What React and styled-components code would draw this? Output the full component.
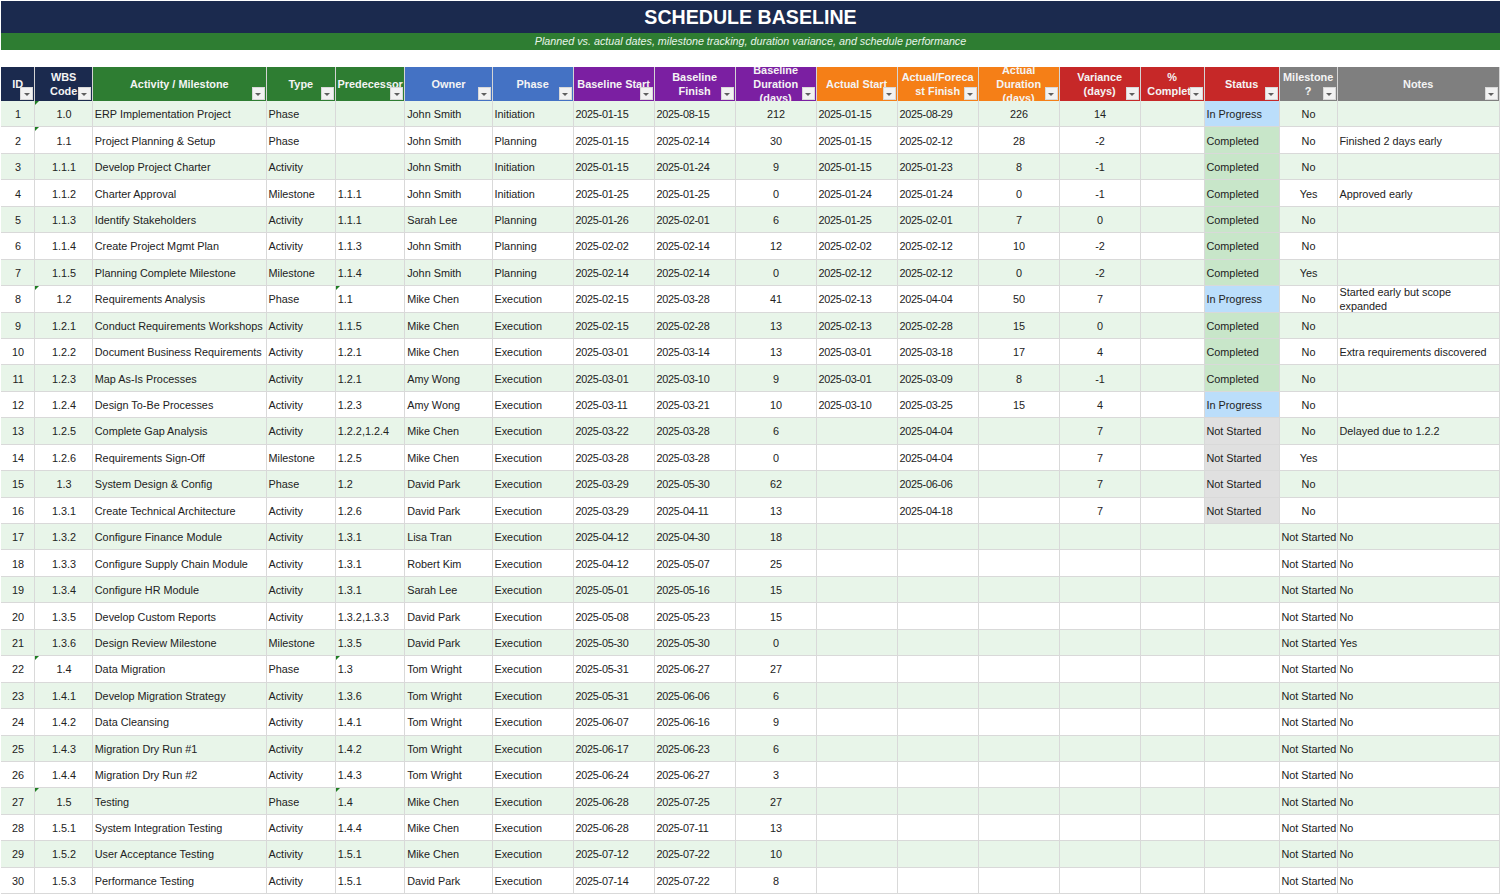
import styled, { createGlobalStyle } from "styled-components";

const GlobalStyle = createGlobalStyle`
  html, body {
    margin: 0;
    padding: 0;
    background: #ffffff;
    overflow: hidden;
  }
  body {
    font-family: "Liberation Sans", Arial, sans-serif;
  }
`;

const columns = [
  { title: ["ID"], color: "#1b2a4e" },
  { title: ["WBS", "Code"], color: "#1b2a4e" },
  { title: ["Activity / Milestone"], color: "#2e7d32" },
  { title: ["Type"], color: "#2e7d32" },
  { title: ["Predecessor"], color: "#2e7d32" },
  { title: ["Owner"], color: "#4472c4" },
  { title: ["Phase"], color: "#4472c4" },
  { title: ["Baseline Start"], color: "#7b1fa2" },
  { title: ["Baseline", "Finish"], color: "#7b1fa2" },
  { title: ["Baseline", "Duration", "(days)"], color: "#7b1fa2" },
  { title: ["Actual Start"], color: "#f57f17" },
  { title: ["Actual/Foreca", "st Finish"], color: "#f57f17" },
  { title: ["Actual", "Duration", "(days)"], color: "#f57f17" },
  { title: ["Variance", "(days)"], color: "#c62828" },
  { title: ["%", "Complete"], color: "#c62828" },
  { title: ["Status"], color: "#c62828" },
  { title: ["Milestone", "?"], color: "#7f7f7f" },
  { title: ["Notes"], color: "#7f7f7f" },
];

const rows = [
  ["1", "1.0", "ERP Implementation Project", "Phase", "", "John Smith", "Initiation", "2025-01-15", "2025-08-15", "212", "2025-01-15", "2025-08-29", "226", "14", "In Progress", "No", "", "w"],
  ["2", "1.1", "Project Planning & Setup", "Phase", "", "John Smith", "Planning", "2025-01-15", "2025-02-14", "30", "2025-01-15", "2025-02-12", "28", "-2", "Completed", "No", "Finished 2 days early", "w"],
  ["3", "1.1.1", "Develop Project Charter", "Activity", "", "John Smith", "Initiation", "2025-01-15", "2025-01-24", "9", "2025-01-15", "2025-01-23", "8", "-1", "Completed", "No", ""],
  ["4", "1.1.2", "Charter Approval", "Milestone", "1.1.1", "John Smith", "Initiation", "2025-01-25", "2025-01-25", "0", "2025-01-24", "2025-01-24", "0", "-1", "Completed", "Yes", "Approved early"],
  ["5", "1.1.3", "Identify Stakeholders", "Activity", "1.1.1", "Sarah Lee", "Planning", "2025-01-26", "2025-02-01", "6", "2025-01-25", "2025-02-01", "7", "0", "Completed", "No", ""],
  ["6", "1.1.4", "Create Project Mgmt Plan", "Activity", "1.1.3", "John Smith", "Planning", "2025-02-02", "2025-02-14", "12", "2025-02-02", "2025-02-12", "10", "-2", "Completed", "No", ""],
  ["7", "1.1.5", "Planning Complete Milestone", "Milestone", "1.1.4", "John Smith", "Planning", "2025-02-14", "2025-02-14", "0", "2025-02-12", "2025-02-12", "0", "-2", "Completed", "Yes", ""],
  ["8", "1.2", "Requirements Analysis", "Phase", "1.1", "Mike Chen", "Execution", "2025-02-15", "2025-03-28", "41", "2025-02-13", "2025-04-04", "50", "7", "In Progress", "No", "Started early but scope expanded", "wp"],
  ["9", "1.2.1", "Conduct Requirements Workshops", "Activity", "1.1.5", "Mike Chen", "Execution", "2025-02-15", "2025-02-28", "13", "2025-02-13", "2025-02-28", "15", "0", "Completed", "No", ""],
  ["10", "1.2.2", "Document Business Requirements", "Activity", "1.2.1", "Mike Chen", "Execution", "2025-03-01", "2025-03-14", "13", "2025-03-01", "2025-03-18", "17", "4", "Completed", "No", "Extra requirements discovered"],
  ["11", "1.2.3", "Map As-Is Processes", "Activity", "1.2.1", "Amy Wong", "Execution", "2025-03-01", "2025-03-10", "9", "2025-03-01", "2025-03-09", "8", "-1", "Completed", "No", ""],
  ["12", "1.2.4", "Design To-Be Processes", "Activity", "1.2.3", "Amy Wong", "Execution", "2025-03-11", "2025-03-21", "10", "2025-03-10", "2025-03-25", "15", "4", "In Progress", "No", ""],
  ["13", "1.2.5", "Complete Gap Analysis", "Activity", "1.2.2,1.2.4", "Mike Chen", "Execution", "2025-03-22", "2025-03-28", "6", "", "2025-04-04", "", "7", "Not Started", "No", "Delayed due to 1.2.2"],
  ["14", "1.2.6", "Requirements Sign-Off", "Milestone", "1.2.5", "Mike Chen", "Execution", "2025-03-28", "2025-03-28", "0", "", "2025-04-04", "", "7", "Not Started", "Yes", ""],
  ["15", "1.3", "System Design & Config", "Phase", "1.2", "David Park", "Execution", "2025-03-29", "2025-05-30", "62", "", "2025-06-06", "", "7", "Not Started", "No", ""],
  ["16", "1.3.1", "Create Technical Architecture", "Activity", "1.2.6", "David Park", "Execution", "2025-03-29", "2025-04-11", "13", "", "2025-04-18", "", "7", "Not Started", "No", ""],
  ["17", "1.3.2", "Configure Finance Module", "Activity", "1.3.1", "Lisa Tran", "Execution", "2025-04-12", "2025-04-30", "18", "", "", "", "", "", "Not Started", "No"],
  ["18", "1.3.3", "Configure Supply Chain Module", "Activity", "1.3.1", "Robert Kim", "Execution", "2025-04-12", "2025-05-07", "25", "", "", "", "", "", "Not Started", "No"],
  ["19", "1.3.4", "Configure HR Module", "Activity", "1.3.1", "Sarah Lee", "Execution", "2025-05-01", "2025-05-16", "15", "", "", "", "", "", "Not Started", "No"],
  ["20", "1.3.5", "Develop Custom Reports", "Activity", "1.3.2,1.3.3", "David Park", "Execution", "2025-05-08", "2025-05-23", "15", "", "", "", "", "", "Not Started", "No"],
  ["21", "1.3.6", "Design Review Milestone", "Milestone", "1.3.5", "David Park", "Execution", "2025-05-30", "2025-05-30", "0", "", "", "", "", "", "Not Started", "Yes"],
  ["22", "1.4", "Data Migration", "Phase", "1.3", "Tom Wright", "Execution", "2025-05-31", "2025-06-27", "27", "", "", "", "", "", "Not Started", "No", "wp"],
  ["23", "1.4.1", "Develop Migration Strategy", "Activity", "1.3.6", "Tom Wright", "Execution", "2025-05-31", "2025-06-06", "6", "", "", "", "", "", "Not Started", "No"],
  ["24", "1.4.2", "Data Cleansing", "Activity", "1.4.1", "Tom Wright", "Execution", "2025-06-07", "2025-06-16", "9", "", "", "", "", "", "Not Started", "No"],
  ["25", "1.4.3", "Migration Dry Run #1", "Activity", "1.4.2", "Tom Wright", "Execution", "2025-06-17", "2025-06-23", "6", "", "", "", "", "", "Not Started", "No"],
  ["26", "1.4.4", "Migration Dry Run #2", "Activity", "1.4.3", "Tom Wright", "Execution", "2025-06-24", "2025-06-27", "3", "", "", "", "", "", "Not Started", "No"],
  ["27", "1.5", "Testing", "Phase", "1.4", "Mike Chen", "Execution", "2025-06-28", "2025-07-25", "27", "", "", "", "", "", "Not Started", "No", "wp"],
  ["28", "1.5.1", "System Integration Testing", "Activity", "1.4.4", "Mike Chen", "Execution", "2025-06-28", "2025-07-11", "13", "", "", "", "", "", "Not Started", "No"],
  ["29", "1.5.2", "User Acceptance Testing", "Activity", "1.5.1", "Mike Chen", "Execution", "2025-07-12", "2025-07-22", "10", "", "", "", "", "", "Not Started", "No"],
  ["30", "1.5.3", "Performance Testing", "Activity", "1.5.1", "David Park", "Execution", "2025-07-14", "2025-07-22", "8", "", "", "", "", "", "Not Started", "No"],
];

const statusColors = {
  "In Progress": "#bbdefb",
  Completed: "#c8e6c9",
  "Not Started": "#e0e0e0",
};

const Page = styled.div`
  width: 1500px;
  height: 895px;
  overflow: hidden;
  padding-top: 1px;
  box-sizing: border-box;
`;

const Title = styled.h1`
  margin: 0 0 0 1px;
  height: 32px;
  line-height: 32px;
  background: #1b2a4e;
  color: #ffffff;
  font-size: 19.6px;
  font-weight: 700;
  text-align: center;
`;

const Subtitle = styled.div`
  margin: 0 0 17px 1px;
  height: 17px;
  line-height: 17px;
  background: #2e7d32;
  color: #e8f5e9;
  font-size: 10.75px;
  font-style: italic;
  text-align: center;
`;

const Sheet = styled.div`
  display: grid;
  margin-left: 1px;
  grid-template-columns: 34.3px 57.7px 173.7px 69.3px 69.4px 87.3px 81px 81px 81px 81px 81px 81px 81px 81px 64px 75px 58px 162px;
  grid-template-rows: 34px;
  grid-auto-rows: 26.45px;
`;

const HeaderCell = styled.div`
  position: relative;
  overflow: hidden;
  display: flex;
  flex-direction: column;
  align-items: center;
  justify-content: center;
  box-sizing: border-box;
  background: ${(props) => props.$color};
  border-right: 1px solid #d4d4d4;
  color: #f4f4f4;
  font-size: 10.9px;
  font-weight: 700;
  line-height: 14px;
  white-space: nowrap;
`;

const FilterButton = styled.span`
  position: absolute;
  right: 1px;
  bottom: 1px;
  width: 13px;
  height: 13px;
  box-sizing: border-box;
  display: flex;
  align-items: center;
  justify-content: center;
  padding-top: 2px;
  background: #f2f2f2;
  border: 1px solid #d8d8d8;
  &::after {
    content: "";
    border-left: 3px solid transparent;
    border-right: 3px solid transparent;
    border-top: 3px solid #5f5f5f;
  }
`;

const Cell = styled.div`
  position: relative;
  min-width: 0;
  display: flex;
  align-items: center;
  justify-content: ${(props) => (props.$center ? "center" : "flex-start")};
  box-sizing: border-box;
  padding: 1px 1px 0 1.8px;
  background: ${(props) => props.$fill || (props.$odd ? "#e8f5e9" : "#ffffff")};
  border-right: 1px solid #d9d9d9;
  border-bottom: 1px solid #d9d9d9;
  color: #222222;
  font-size: 10.85px;
  letter-spacing: ${(props) => (props.$date ? "-0.25px" : "0")};
  line-height: 14px;
  white-space: ${(props) => (props.$wrap ? "normal" : "nowrap")};
  overflow: ${(props) => (props.$spill ? "visible" : "hidden")};
  z-index: ${(props) => (props.$spill ? 1 : 0)};
`;

const Flag = styled.span`
  position: absolute;
  top: 0;
  left: 0;
  border-top: 4px solid #1e7d22;
  border-right: 4px solid transparent;
`;

const centeredColumns = [0, 1, 9, 12, 13];
const dateColumns = [7, 8, 10, 11];

const DataRow = ({ row, index }) => {
  const odd = index % 2 === 0;
  const flags = row[17] || "";
  const beforeActual = row.slice(0, 14);
  const isLate = index >= 16;

  return (
    <>
      {beforeActual.map((value, i) => (
        <Cell key={i} $odd={odd} $center={centeredColumns.includes(i)} $date={dateColumns.includes(i)}>
          {((i === 1 && flags.includes("w")) || (i === 4 && flags.includes("p"))) && <Flag />}
          {value}
        </Cell>
      ))}
      <Cell $odd={odd} />
      {isLate ? (
        <>
          <Cell $odd={odd} />
          <Cell $odd={odd} $spill>
            {row[15]}
          </Cell>
          <Cell $odd={odd}>{row[16]}</Cell>
        </>
      ) : (
        <>
          <Cell $odd={odd} $fill={statusColors[row[14]]}>
            {row[14]}
          </Cell>
          <Cell $odd={odd} $center>
            {row[15]}
          </Cell>
          <Cell $odd={odd} $wrap>
            {row[16]}
          </Cell>
        </>
      )}
    </>
  );
};

export default function App() {
  return (
    <Page>
      <GlobalStyle />
      <Title>SCHEDULE BASELINE</Title>
      <Subtitle>Planned vs. actual dates, milestone tracking, duration variance, and schedule performance</Subtitle>
      <Sheet>
        {columns.map((column) => (
          <HeaderCell key={column.title.join(" ")} $color={column.color}>
            {column.title.map((line) => (
              <span key={line}>{line}</span>
            ))}
            <FilterButton />
          </HeaderCell>
        ))}
        {rows.map((row, index) => (
          <DataRow key={row[0]} row={row} index={index} />
        ))}
      </Sheet>
    </Page>
  );
}
